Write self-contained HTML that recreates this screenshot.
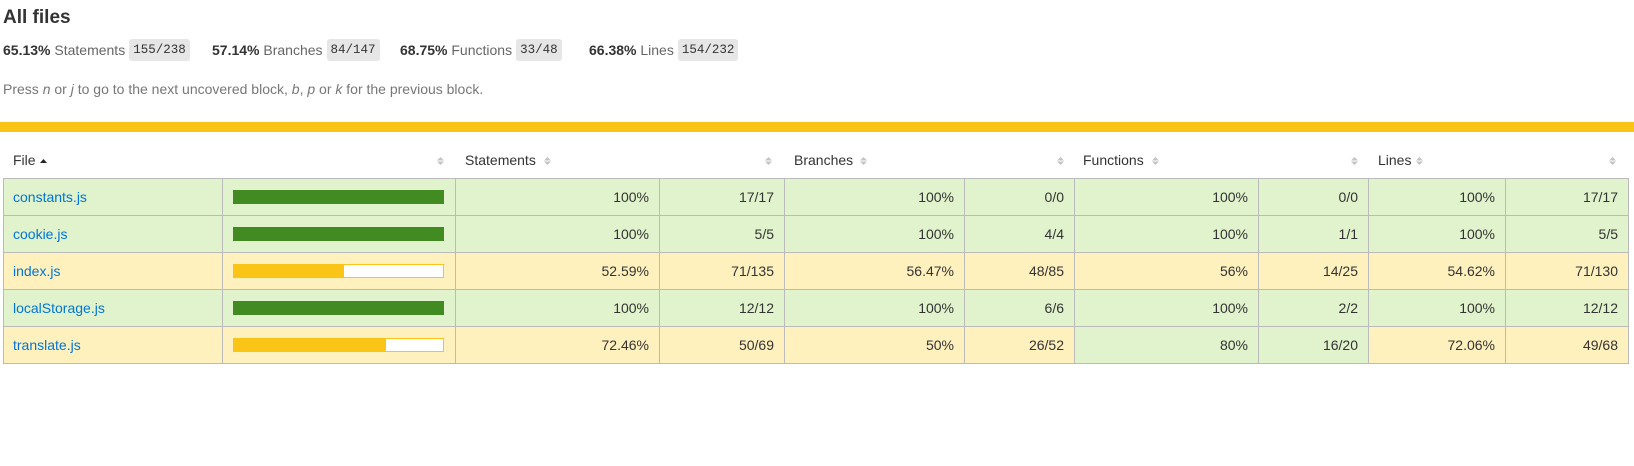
<!DOCTYPE html>
<html><head><meta charset="utf-8">
<style>
*{margin:0;padding:0;box-sizing:border-box}
body{width:1634px;height:466px;background:#fff;font-family:"Liberation Sans",Arial,sans-serif;color:#333;position:relative;overflow:hidden}
.abs{position:absolute;white-space:nowrap}
h1{position:absolute;left:3px;top:7px;font-size:19px;font-weight:bold;color:#333}
.st{font-size:14px;top:39px;line-height:22px}
.st b{color:#333}
.st .l{color:#666}
.badge{display:inline-block;background:#e6e6e6;border-radius:3px;font-family:"Liberation Mono",monospace;font-size:12.5px;color:#333;padding:0 4px;height:22px;line-height:22px;vertical-align:top;margin-left:4px}
.press{left:3px;top:81px;font-size:14px;color:#777}
.bar{position:absolute;left:0;top:122px;width:1634px;height:10px;background:#f9c416}
.hd{font-size:14px;top:152px;color:#333}
.si{position:absolute;top:157px;width:7px;height:8px}
table{position:absolute;left:3px;top:178px;border-collapse:collapse;table-layout:fixed;width:1625px;font-size:14px}
td{border:1px solid #bbb;height:37px;padding:0 10px;text-align:right;color:#333}
td.f{text-align:left;padding-left:9px}
td.f a{color:#0074d9;text-decoration:none}
tr.h td{background:#e0f3cc}
tr.m td{background:#fff1bd}
.pb{width:211px;height:14px;margin-left:0;position:relative}
tr.h .pb{background:#428a22}
tr.m .pb{background:#fff;border:1px solid #fac516}
.pb i{position:absolute;left:0;top:0;bottom:0;background:#fac516}
td.p{padding-left:10px;padding-right:0;text-align:left}
</style></head><body>
<h1>All files</h1>
<div class="abs st" style="left:3px"><b>65.13%</b> <span class="l">Statements</span><span class="badge">155/238</span></div>
<div class="abs st" style="left:212px"><b>57.14%</b> <span class="l">Branches</span><span class="badge">84/147</span></div>
<div class="abs st" style="left:400px"><b>68.75%</b> <span class="l">Functions</span><span class="badge">33/48</span></div>
<div class="abs st" style="left:589px"><b>66.38%</b> <span class="l">Lines</span><span class="badge">154/232</span></div>
<div class="abs press">Press <i>n</i> or <i>j</i> to go to the next uncovered block, <i>b</i>, <i>p</i> or <i>k</i> for the previous block.</div>
<div class="bar"></div>

<div class="abs hd" style="left:13px">File</div>
<svg class="si" style="left:40px;top:157px" viewBox="0 0 7 8"><path d="M0 6 L3.5 2 L7 6Z" fill="#222"/></svg>
<div class="abs hd" style="left:465px">Statements</div>
<div class="abs hd" style="left:794px">Branches</div>
<div class="abs hd" style="left:1083px">Functions</div>
<div class="abs hd" style="left:1378px">Lines</div>
<svg class="si" style="left:437px" viewBox="0 0 7 8"><path d="M0 3.5L3.5 0 7 3.5Z M0 4.5L3.5 8 7 4.5Z" fill="#c4c4c4"/></svg>
<svg class="si" style="left:544px" viewBox="0 0 7 8"><path d="M0 3.5L3.5 0 7 3.5Z M0 4.5L3.5 8 7 4.5Z" fill="#c4c4c4"/></svg>
<svg class="si" style="left:765px" viewBox="0 0 7 8"><path d="M0 3.5L3.5 0 7 3.5Z M0 4.5L3.5 8 7 4.5Z" fill="#c4c4c4"/></svg>
<svg class="si" style="left:860px" viewBox="0 0 7 8"><path d="M0 3.5L3.5 0 7 3.5Z M0 4.5L3.5 8 7 4.5Z" fill="#c4c4c4"/></svg>
<svg class="si" style="left:1057px" viewBox="0 0 7 8"><path d="M0 3.5L3.5 0 7 3.5Z M0 4.5L3.5 8 7 4.5Z" fill="#c4c4c4"/></svg>
<svg class="si" style="left:1152px" viewBox="0 0 7 8"><path d="M0 3.5L3.5 0 7 3.5Z M0 4.5L3.5 8 7 4.5Z" fill="#c4c4c4"/></svg>
<svg class="si" style="left:1351px" viewBox="0 0 7 8"><path d="M0 3.5L3.5 0 7 3.5Z M0 4.5L3.5 8 7 4.5Z" fill="#c4c4c4"/></svg>
<svg class="si" style="left:1416px" viewBox="0 0 7 8"><path d="M0 3.5L3.5 0 7 3.5Z M0 4.5L3.5 8 7 4.5Z" fill="#c4c4c4"/></svg>
<svg class="si" style="left:1609px" viewBox="0 0 7 8"><path d="M0 3.5L3.5 0 7 3.5Z M0 4.5L3.5 8 7 4.5Z" fill="#c4c4c4"/></svg>

<table>
<colgroup><col style="width:219px"><col style="width:233px"><col style="width:204px"><col style="width:125px"><col style="width:180px"><col style="width:110px"><col style="width:184px"><col style="width:110px"><col style="width:137px"><col style="width:123px"></colgroup>
<tr class="h"><td class="f"><a>constants.js</a></td><td class="p"><div class="pb"></div></td><td>100%</td><td>17/17</td><td>100%</td><td>0/0</td><td>100%</td><td>0/0</td><td>100%</td><td>17/17</td></tr>
<tr class="h"><td class="f"><a>cookie.js</a></td><td class="p"><div class="pb"></div></td><td>100%</td><td>5/5</td><td>100%</td><td>4/4</td><td>100%</td><td>1/1</td><td>100%</td><td>5/5</td></tr>
<tr class="m"><td class="f"><a>index.js</a></td><td class="p"><div class="pb"><i style="width:52.6%"></i></div></td><td>52.59%</td><td>71/135</td><td>56.47%</td><td>48/85</td><td>56%</td><td>14/25</td><td>54.62%</td><td>71/130</td></tr>
<tr class="h"><td class="f"><a>localStorage.js</a></td><td class="p"><div class="pb"></div></td><td>100%</td><td>12/12</td><td>100%</td><td>6/6</td><td>100%</td><td>2/2</td><td>100%</td><td>12/12</td></tr>
<tr class="m"><td class="f"><a>translate.js</a></td><td class="p"><div class="pb"><i style="width:72.5%"></i></div></td><td>72.46%</td><td>50/69</td><td style="background:#fff1bd">50%</td><td style="background:#fff1bd">26/52</td><td style="background:#e0f3cc">80%</td><td style="background:#e0f3cc">16/20</td><td>72.06%</td><td>49/68</td></tr>
</table>
</body></html>
